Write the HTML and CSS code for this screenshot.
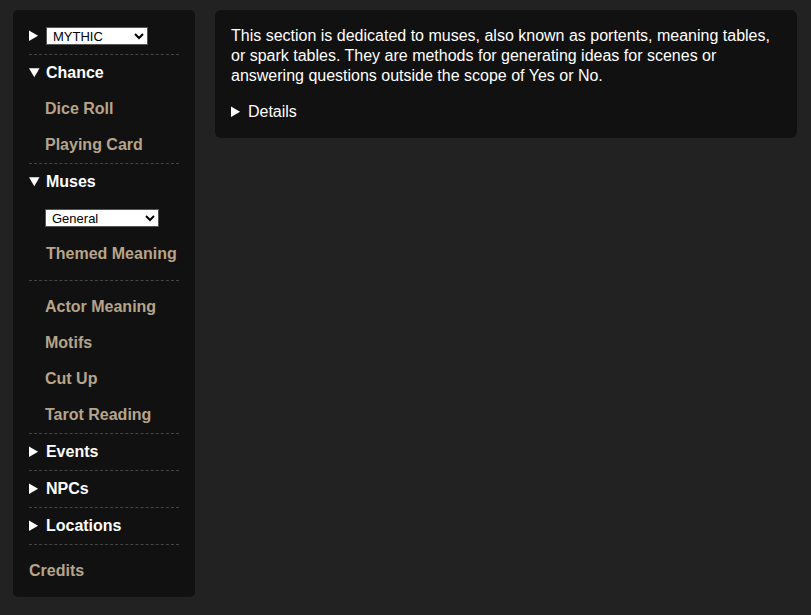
FILE: index.html
```html
<!DOCTYPE html>
<html lang="en">
  <head>
    <meta charset="UTF-8" />
    <meta name="viewport" content="width=device-width, initial-scale=1.0" />
    <title>Muses</title>

    <link rel="stylesheet" href="styles.css">
  </head>
  <body>
    <nav class="sidebar">
      <details class="nav-group">
        <summary>
          <select id="system" class="system-select">
            <option>MYTHIC</option>
            <option>CRGE</option>
          </select>
        </summary>
      </details>

      <details class="nav-group" open>
        <summary>Chance</summary>
        <a class="nav-link" href="#">Dice Roll</a>
        <a class="nav-link" href="#">Playing Card</a>
      </details>

      <details class="nav-group" open>
        <summary>Muses</summary>
        <div class="muse-group">
          <div class="nav-item">
            <select id="theme" class="theme-select">
              <option>General</option>
              <option>Fantasy</option>
            </select>
          </div>
          <a class="nav-link" href="#">Themed Meaning</a>
        </div>
        <a class="nav-link" href="#">Actor Meaning</a>
        <a class="nav-link" href="#">Motifs</a>
        <a class="nav-link" href="#">Cut Up</a>
        <a class="nav-link" href="#">Tarot Reading</a>
      </details>

      <details class="nav-group">
        <summary>Events</summary>
      </details>

      <details class="nav-group">
        <summary>NPCs</summary>
      </details>

      <details class="nav-group">
        <summary>Locations</summary>
      </details>

      <a class="credits" href="#">Credits</a>
    </nav>

    <main class="content">
      <p>
        This section is dedicated to muses, also known as portents, meaning tables,
        or spark tables. They are methods for generating ideas for scenes or
        answering questions outside the scope of Yes or No.
      </p>

      <details class="more">
        <summary>Details</summary>
        <p>Pick a muse from the menu to draw a result.</p>
      </details>
    </main>
  </body>
</html>
```

FILE: styles.css
```css
* {
  box-sizing: border-box;
}

body {
  background-color: #222;
  color: #fff;
  display: flex;
  align-items: flex-start;
  gap: 20px;
  margin: 0;
  padding: 10px 14px 10px 13px;
  font-family: 'Liberation Sans', Arial, sans-serif;
  font-size: 16px;
}

.sidebar {
  background-color: #111;
  border-radius: 5px;
  flex: 0 0 182px;
  padding: 8px 16px;
}

.nav-group {
  border-bottom: 1px dashed #444;
}

.nav-group summary {
  cursor: pointer;
  font-weight: bold;
  line-height: 18px;
  padding: 9px 0;
}

.nav-link {
  color: #b6a48b;
  display: block;
  font-weight: bold;
  line-height: 18px;
  padding: 9px 0 9px 16px;
  text-decoration: none;
}

.nav-item {
  line-height: 18px;
  padding: 9px 0 9px 16px;
}

.muse-group {
  border-bottom: 1px dashed #444;
  margin-bottom: 8px;
  padding-bottom: 8px;
}

.muse-group .nav-link {
  padding-left: 17px;
}

select {
  background-color: #fff;
  border: 1px solid #555;
  border-radius: 0;
  color: #000;
  font-family: 'Liberation Sans', Arial, sans-serif;
  font-size: 13px;
  height: 18px;
  padding: 0 2px;
  vertical-align: top;
}

.system-select {
  width: 102px;
}

.theme-select {
  width: 114px;
}

.credits {
  color: #b6a48b;
  display: block;
  font-weight: bold;
  line-height: 18px;
  padding: 17px 0 9px;
  text-decoration: none;
}

.content {
  background-color: #111;
  border-radius: 6px;
  flex: 1;
  padding: 16px;
}

.content p {
  line-height: 20px;
  margin: 0 0 16px;
}

.more summary {
  cursor: pointer;
  line-height: 20px;
}

.more p {
  margin: 10px 0 0;
}
```
